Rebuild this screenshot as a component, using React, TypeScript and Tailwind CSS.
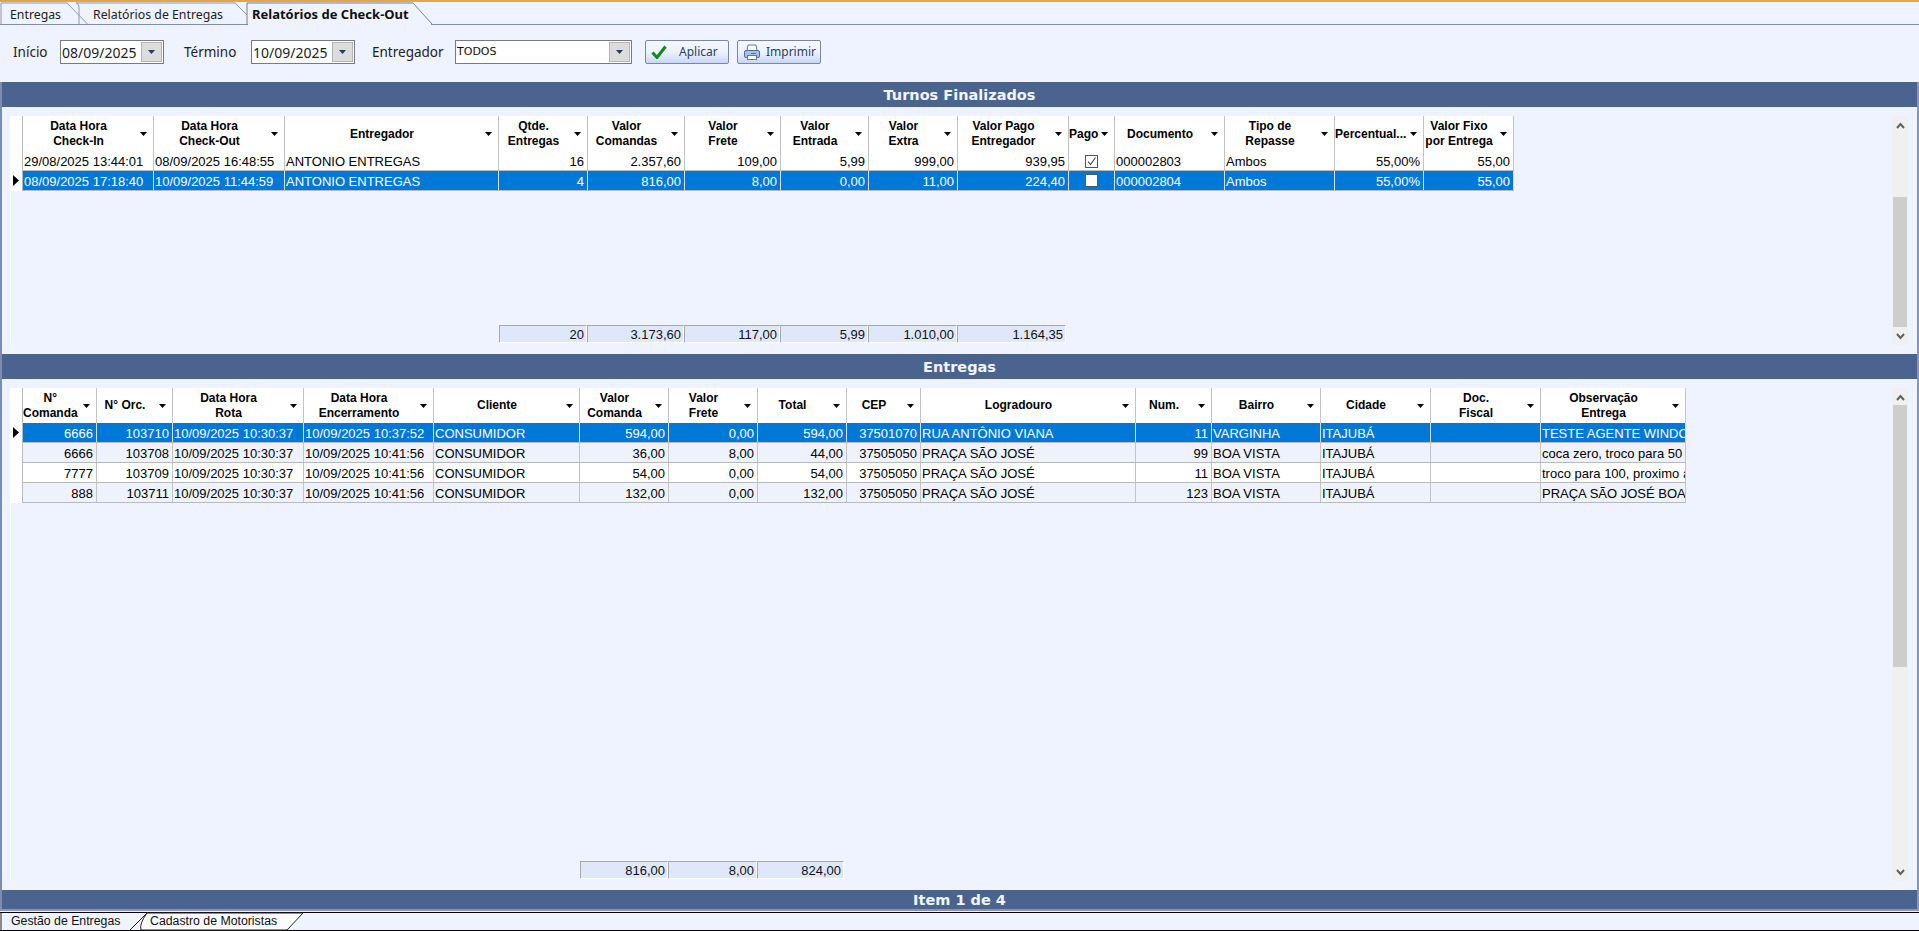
import React from "react";

const sans = "font-['Liberation_Sans',Arial,sans-serif]";
const ui = "font-['Noto_Sans','DejaVu_Sans',sans-serif]";
const T1 = "grid grid-cols-[131px_131px_214px_89px_97px_96px_88px_89px_111px_46px_110px_110px_89px_90px] w-max";
const T2 = "grid grid-cols-[74px_76px_131px_130px_146px_89px_89px_89px_74px_215px_76px_109px_110px_110px_145px] w-max";

function Caret({ cls }: { cls?: string }) {
  return (
    <svg viewBox="0 0 7 4" className={`w-[7px] h-[4px] shrink-0 ${cls ?? ""}`}>
      <path d="M0 0H7L3.5 4Z" fill="currentColor" />
    </svg>
  );
}

function HeadCell({ lines }: { lines: string[] }) {
  return (
    <div className="relative flex items-center border-r border-[#c4c4c4] bg-white pr-[19px] min-w-0">
      <div className="flex-1 text-center text-[12px] font-bold leading-[15px] text-black whitespace-nowrap">
        {lines.map((l) => (
          <div key={l}>{l}</div>
        ))}
      </div>
      <Caret cls="absolute right-[6px] top-1/2 -mt-[2px] text-black" />
    </div>
  );
}

function CheckBox({ on }: { on: boolean }) {
  return (
    <div className="flex h-full items-center justify-center">
      <div className="flex h-[13px] w-[13px] items-center justify-center border border-[#555] bg-white">
        {on && (
          <svg viewBox="0 0 11 11" className="h-[11px] w-[11px]">
            <path d="M2 5.5L4.5 8.5L9.5 1.5" fill="none" stroke="#444" strokeWidth="1.1" />
          </svg>
        )}
      </div>
    </div>
  );
}

function DataRow({ cols, cells, sel, bg, marker, h, lh, check }: { cols: string; cells: string[]; sel?: boolean; bg: string; marker?: boolean; h: string; lh: string; check?: { idx: number; on: boolean } }) {
  return (
    <div className={`relative ${cols} ${h} border-b border-[#b9b9b9] ${sel ? "bg-[#0078d7] text-white" : `${bg} text-black`}`}>
      {marker && (
        <svg viewBox="0 0 6 11" className="absolute -left-[10px] top-[4px] h-[11px] w-[6px]">
          <path d="M0 0L6 5.5L0 11Z" fill="#000" />
        </svg>
      )}
      {cells.map((c, i) => {
        const right = /^[\d.,]+%?$/.test(c) && !/^0000/.test(c);
        if (check && check.idx === i)
          return (
            <div key={i} className={`border-r ${sel ? "border-[#cfe4f7]" : "border-[#c4c4c4]"}`}>
              <CheckBox on={check.on} />
            </div>
          );
        return (
          <div
            key={i}
            className={`overflow-hidden whitespace-nowrap border-r text-[13px] ${lh} ${sel ? "border-[#cfe4f7]" : "border-[#c4c4c4]"} ${right ? "pr-[3px] text-right" : "pl-[1px] text-left"}`}
          >
            {c}
          </div>
        );
      })}
    </div>
  );
}

function Foot({ w, v }: { w: string; v: string }) {
  return (
    <div className={`${w} h-[18px] border-l border-t border-[#a9a9a9] border-r-white border-b-white border-r border-b bg-[#dfe7fb] px-[2px] text-right text-[13px] leading-[17px] text-[#111]`}>
      {v}
    </div>
  );
}

function Band({ title, cls }: { title: string; cls: string }) {
  return (
    <div className={`flex ${cls} items-center justify-center bg-[#4a648f] pt-[3px] font-['DejaVu_Sans',sans-serif] text-[14.5px] font-bold text-[#f2f5fb]`}>
      {title}
    </div>
  );
}

function Scroll({ topH, thumbH }: { topH: string; thumbH: string }) {
  return (
    <div className="flex w-[16px] flex-col bg-[#f0f0f0]">
      <div className={`${topH} shrink-0 pt-[6px]`}>
        <svg viewBox="0 0 9 7" className="mx-auto h-[7px] w-[9px]">
          <path d="M1 6L4.5 2L8 6" fill="none" stroke="#606060" strokeWidth="2" />
        </svg>
      </div>
      <div className={`${thumbH} mx-[1px] shrink-0 bg-[#cdcdcd]`} />
      <div className="flex-1" />
      <div className="flex h-[17px] shrink-0 items-center">
        <svg viewBox="0 0 9 7" className="mx-auto h-[7px] w-[9px]">
          <path d="M1 1L4.5 5L8 1" fill="none" stroke="#606060" strokeWidth="2" />
        </svg>
      </div>
    </div>
  );
}

function Combo({ value, w }: { value: string; w: string }) {
  return (
    <div className={`flex h-[24px] ${w} items-center border border-[#7a7a7a] bg-white`}>
      <span className={`flex-1 pl-[1px] ${ui} text-[14px] text-[#222]`}>{value}</span>
      <span className="mr-[1px] flex h-[20px] w-[21px] items-center justify-center border border-[#b4b4b4] bg-[#dcdcdc]">
        <Caret cls="text-[#1c3f78]" />
      </span>
    </div>
  );
}

function Btn({ label, w, icon, gap }: { label: string; w: string; icon: React.ReactNode; gap: string }) {
  return (
    <div className={`flex h-[24px] ${w} items-center ${gap} rounded-[2px] border border-[#7b86a0] bg-gradient-to-b from-[#f4f7ff] via-[#eef2fe] to-[#c9d7f6] pl-[5px] ${ui} text-[12px] text-[#27406b]`}>
      {icon}
      <span>{label}</span>
    </div>
  );
}

const check = (
  <svg viewBox="0 0 16 14" className="h-[14px] w-[16px]">
    <path d="M1.5 7.5L6 12.5L14.5 1.5" fill="none" stroke="#0d8a1e" strokeWidth="3" />
  </svg>
);
const printer = (
  <svg viewBox="0 0 18 17" className="h-[17px] w-[18px]">
    <path d="M5 1H13L14 7H4Z" fill="#fff" stroke="#5a7cab" />
    <rect x="1.5" y="6.5" width="15" height="7" rx="1.5" fill="#a9c0e0" stroke="#4c6f9f" />
    <rect x="4.5" y="11.5" width="9" height="4" fill="#fff" stroke="#5a7cab" />
    <rect x="8" y="9" width="3" height="1" fill="#d33" />
    <rect x="11" y="9" width="2" height="1" fill="#2a2" />
  </svg>
);

function TopTab({ label, active, w, pl }: { label: string; active?: boolean; w: string; pl: string }) {
  return (
    <div className={`relative flex h-[22px] ${w} items-center ${pl} pt-[4px] ${ui} ${active ? "text-[13px] font-bold text-[#101010]" : "text-[12.3px] text-[#222]"}`}>
      <span className="whitespace-nowrap">{label}</span>
    </div>
  );
}

export default function App() {
  const h1 = [
    ["Data Hora", "Check-In"], ["Data Hora", "Check-Out"], ["Entregador"], ["Qtde.", "Entregas"], ["Valor", "Comandas"],
    ["Valor", "Frete"], ["Valor", "Entrada"], ["Valor", "Extra"], ["Valor Pago", "Entregador"], ["Pago"], ["Documento"],
    ["Tipo de", "Repasse"], ["Percentual..."], ["Valor Fixo", "por Entrega"],
  ];
  const h2 = [
    ["N°", "Comanda"], ["N° Orc."], ["Data Hora", "Rota"], ["Data Hora", "Encerramento"], ["Cliente"], ["Valor", "Comanda"],
    ["Valor", "Frete"], ["Total"], ["CEP"], ["Logradouro"], ["Num."], ["Bairro"], ["Cidade"], ["Doc.", "Fiscal"], ["Observação", "Entrega"],
  ];
  const r2 = [
    ["6666", "103710", "10/09/2025 10:30:37", "10/09/2025 10:37:52", "CONSUMIDOR", "594,00", "0,00", "594,00", "37501070", "RUA ANTÔNIO VIANA", "11", "VARGINHA", "ITAJUBÁ", "", "TESTE AGENTE WINDOWS"],
    ["6666", "103708", "10/09/2025 10:30:37", "10/09/2025 10:41:56", "CONSUMIDOR", "36,00", "8,00", "44,00", "37505050", "PRAÇA SÃO JOSÉ", "99", "BOA VISTA", "ITAJUBÁ", "", "coca zero, troco para 50"],
    ["7777", "103709", "10/09/2025 10:30:37", "10/09/2025 10:41:56", "CONSUMIDOR", "54,00", "0,00", "54,00", "37505050", "PRAÇA SÃO JOSÉ", "11", "BOA VISTA", "ITAJUBÁ", "", "troco para 100, proximo a"],
    ["888", "103711", "10/09/2025 10:30:37", "10/09/2025 10:41:56", "CONSUMIDOR", "132,00", "0,00", "132,00", "37505050", "PRAÇA SÃO JOSÉ", "123", "BOA VISTA", "ITAJUBÁ", "", "PRAÇA SÃO JOSÉ BOA VISTA"],
  ];
  return (
    <div className={`flex h-[931px] w-[1919px] flex-col overflow-hidden bg-[#eef3ff] ${sans}`}>
      <div className="h-[2px] shrink-0 bg-[#e9a24c]" />
      {/* top tabs */}
      <div className="relative flex h-[23px] shrink-0 items-end border-b border-[#7d8db0] pl-[1px]">
        <TopTab label="Entregas" w="w-[76px]" pl="pl-[9px]" />
        <TopTab label="Relatórios de Entregas" w="w-[170px]" pl="pl-[16px]" />
        <TopTab label="Relatórios de Check-Out" active w="w-[186px]" pl="pl-[5px]" />
        <svg viewBox="0 0 434 23" className="pointer-events-none absolute left-0 top-0 h-[23px] w-[434px]">
          <path d="M1 23V1H67L88 22.5" fill="none" stroke="#8b98b4" />
          <path d="M79 22V5Q79 2 76 1H235L247 13" fill="none" stroke="#8b98b4" />
          <path d="M247 23V1H413L432 22" fill="none" stroke="#6f7f9f" />
          <path d="M248 22.5H431" stroke="#eef3ff" strokeWidth="2" />
        </svg>
      </div>
      {/* filters */}
      <div className="flex h-[57px] shrink-0 items-start pl-[13px] pt-[15px] text-[14px] text-[#222]">
        <span className={`${ui} w-[47px] text-[13.5px] leading-[24px]`}>Início</span>
        <Combo value="08/09/2025" w="w-[104px]" />
        <span className={`${ui} ml-[20px] w-[67px] text-[13.5px] leading-[24px]`}>Término</span>
        <Combo value="10/09/2025" w="w-[104px]" />
        <span className={`${ui} ml-[17px] w-[83px] text-[13.5px] leading-[24px]`}>Entregador</span>
        <div className="flex h-[24px] w-[177px] items-center border border-[#7a7a7a] bg-white">
          <span className="flex-1 pl-[1px] font-['DejaVu_Sans',sans-serif] text-[11px] text-[#111]">TODOS</span>
          <span className="mr-[1px] flex h-[20px] w-[21px] items-center justify-center border border-[#b4b4b4] bg-[#dcdcdc]">
            <Caret cls="text-[#1c3f78]" />
          </span>
        </div>
        <div className="ml-[13px]"><Btn label="Aplicar" w="w-[84px]" icon={check} gap="gap-[12px]" /></div>
        <div className="ml-[8px]"><Btn label="Imprimir" w="w-[84px]" icon={printer} gap="gap-[5px]" /></div>
      </div>

      <div className="flex flex-1 flex-col border-x-2 border-x-[#7d8db0] border-r-[#8896b6]">
        <Band title="Turnos Finalizados" cls="h-[25px] shrink-0" />
        {/* grid 1 */}
        <div className="flex h-[247px] shrink-0 items-stretch pr-[9px] pl-[8px] pt-[9px] pb-[9px]">
          <div className={`flex flex-1 flex-col border-l border-l-white ${sans}`}>
            <div className="ml-[12px] flex flex-1 flex-col">
              <div className="-ml-[12px] w-max bg-white pl-[12px]">
                <div className="shadow-[-1px_0_0_#b9b9b9]">
                  <div className={`${T1} h-[36px]`}>
                    {h1.map((l) => <HeadCell key={l.join()} lines={l} />)}
                  </div>
                  <DataRow cols={T1} bg="bg-white" h="h-[19px]" lh="leading-[19px]" check={{ idx: 9, on: true }}
                    cells={["29/08/2025 13:44:01", "08/09/2025 16:48:55", "ANTONIO ENTREGAS", "16", "2.357,60", "109,00", "5,99", "999,00", "939,95", "", "000002803", "Ambos", "55,00%", "55,00"]} />
                  <DataRow cols={T1} bg="bg-white" h="h-[20px]" lh="pt-[2px] leading-[18px]" sel marker check={{ idx: 9, on: false }}
                    cells={["08/09/2025 17:18:40", "10/09/2025 11:44:59", "ANTONIO ENTREGAS", "4", "816,00", "8,00", "0,00", "11,00", "224,40", "", "000002804", "Ambos", "55,00%", "55,00"]} />
                </div>
              </div>
              <div className="mt-auto mb-[2px] flex pl-[476px]">
                <Foot w="w-[88px]" v="20" />
                <Foot w="w-[97px]" v="3.173,60" />
                <Foot w="w-[96px]" v="117,00" />
                <Foot w="w-[88px]" v="5,99" />
                <Foot w="w-[89px]" v="1.010,00" />
                <Foot w="w-[109px]" v="1.164,35" />
              </div>
            </div>
          </div>
          <Scroll topH="h-[81px]" thumbH="h-[130px]" />
        </div>

        <Band title="Entregas" cls="h-[25px] shrink-0" />
        {/* grid 2 */}
        <div className="flex h-[511px] shrink-0 items-stretch pr-[9px] pl-[8px] pt-[9px] pb-[9px]">
          <div className={`flex flex-1 flex-col border-l border-l-white ${sans}`}>
            <div className="ml-[12px] flex flex-1 flex-col">
              <div className="-ml-[12px] w-max bg-white pl-[12px]">
                <div className="shadow-[-1px_0_0_#b9b9b9]">
                  <div className={`${T2} h-[35px]`}>
                    {h2.map((l) => <HeadCell key={l.join()} lines={l} />)}
                  </div>
                  {r2.map((c, i) => (
                    <DataRow key={c[1]} cols={T2} h="h-[20px]" lh="pt-[2px] leading-[18px]" sel={i === 0} marker={i === 0} bg={i % 2 === 1 ? "bg-[#eef2fd]" : "bg-white"} cells={c} />
                  ))}
                </div>
              </div>
              <div className="mt-auto mb-[2px] flex pl-[557px]">
                <Foot w="w-[88px]" v="816,00" />
                <Foot w="w-[89px]" v="8,00" />
                <Foot w="w-[87px]" v="824,00" />
              </div>
            </div>
          </div>
          <Scroll topH="h-[17px]" thumbH="h-[262px]" />
        </div>

        <Band title="Item 1 de 4" cls="h-[19px] shrink-0" />
      </div>

      <div className="h-[2px] shrink-0 bg-[#8896b6]" />
      <div className="h-[1px] shrink-0" />
      {/* bottom tabs */}
      <div className="relative flex h-[19px] shrink-0 items-center border-y border-black text-[12.3px] text-[#111]">
        <svg viewBox="0 0 310 19" className="pointer-events-none absolute left-0 -top-[1px] h-[19px] w-[310px]">
          <path d="M1 1V18" stroke="#222" />
          <path d="M130 18L147 1H303L287 18H141Q139 12 147 1" fill="#fbfbfd" stroke="#222" />
        </svg>
        <span className="relative ml-[11px] w-[139px]">Gestão de Entregas</span>
        <span className="relative">Cadastro de Motoristas</span>
      </div>
    </div>
  );
}
